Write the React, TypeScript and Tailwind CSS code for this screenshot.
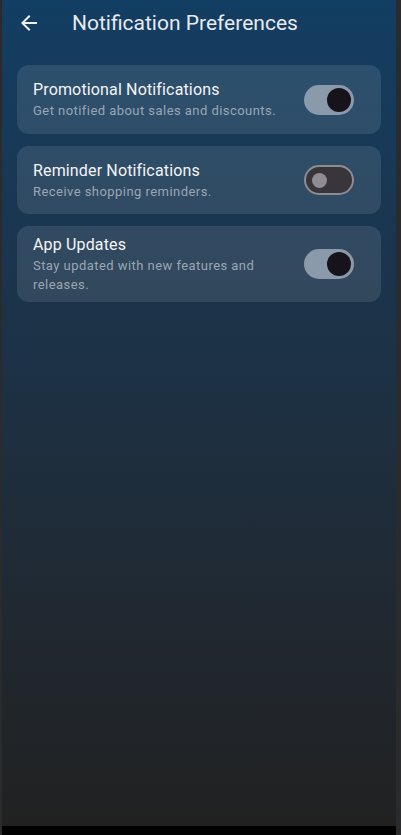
import React from "react";

function Switch({ on }: { on: boolean }) {
  if (on) {
    return (
      <div className="flex h-[30px] w-[50px] shrink-0 items-center justify-end rounded-full bg-[#8a9aab] pr-[3px]">
        <div className="h-[24px] w-[24px] rounded-full bg-[#16131a]" />
      </div>
    );
  }
  return (
    <div className="flex h-[30px] w-[50px] shrink-0 items-center justify-start rounded-full border-2 border-[#8f8c91] bg-[#38363b] pl-[6px]">
      <div className="h-[15px] w-[15px] rounded-full bg-[#8f8c93]" />
    </div>
  );
}

function Card({ title, sub, on, tall }: { title: string; sub: string; on: boolean; tall?: boolean }) {
  return (
    <div
      className={
        tall
          ? "flex min-h-[69px] items-center rounded-[12px] bg-white/10 py-[8px] pl-[16px] pr-[27px]"
          : "flex min-h-[68px] items-center rounded-[12px] bg-white/10 py-[8px] pl-[16px] pr-[27px]"
      }
    >
      <div className="flex min-w-0 flex-1 flex-col pr-[16px]">
        <div className="text-[16px] leading-[22px] tracking-[0.15px] text-[#f5f5f7]">{title}</div>
        <div className="text-[13px] leading-[19px] tracking-[0.45px] text-[#9ba6b2]">{sub}</div>
      </div>
      <Switch on={on} />
    </div>
  );
}

export default function App() {
  return (
    <div
      className="flex h-[835px] w-[401px] bg-[#2a2b2d]"
      style={{ fontFamily: "Roboto, 'Noto Sans', sans-serif" }}
    >
      <div className="w-[2px] shrink-0" />
      <div className="flex w-[394px] shrink-0 flex-col">
        <div className="flex h-[826px] flex-col bg-gradient-to-b from-[#123e63] to-[#212121]">
          <div className="flex h-[45px] items-center pl-[15px]">
            <svg width="24" height="24" viewBox="0 0 24 24" fill="#eef0f4">
              <path d="M20 11H7.83l5.59-5.59L12 4l-8 8 8 8 1.41-1.41L7.83 13H20v-2z" />
            </svg>
            <div className="ml-[31px] text-[21px] leading-[28px] text-[#e9e9f0]">Notification Preferences</div>
          </div>
          <div className="mt-[20px] flex flex-col gap-[12px] px-[15px]">
            <Card title="Promotional Notifications" sub="Get notified about sales and discounts." on={true} tall />
            <Card title="Reminder Notifications" sub="Receive shopping reminders." on={false} />
            <Card title="App Updates" sub="Stay updated with new features and releases." on={true} />
          </div>
        </div>
        <div className="h-[9px] bg-black" />
      </div>
    </div>
  );
}
